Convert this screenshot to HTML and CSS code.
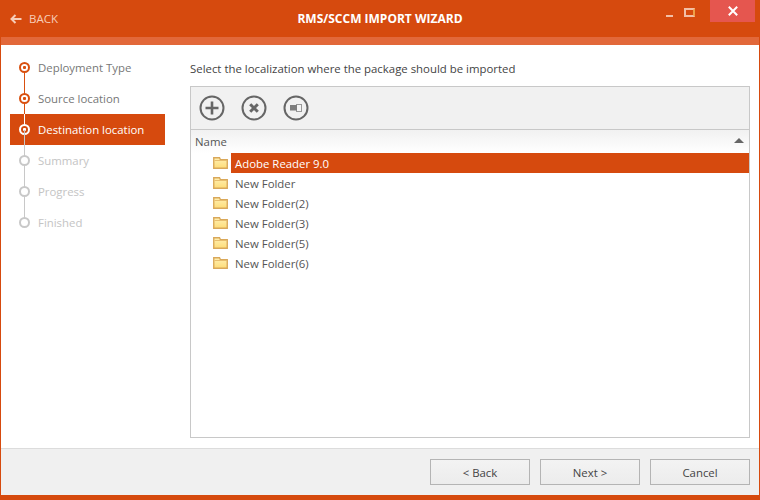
FILE: index.html
```html
<!DOCTYPE html>
<html lang="en">
<head>
<meta charset="utf-8">
<title>RMS/SCCM Import Wizard</title>
<link rel="stylesheet" href="styles.css">
</head>
<body>
<svg class="defs" width="0" height="0">
  <defs>
    <linearGradient id="fold" x1="0" y1="0" x2="0" y2="1">
      <stop offset="0" stop-color="#fff0b4"/>
      <stop offset="1" stop-color="#fddc78"/>
    </linearGradient>
  </defs>
  <symbol id="folder" viewBox="0 0 15 12">
    <path d="M.75 11.250V.75H6.500L7.500 2.750H14.250V11.250z" fill="url(#fold)" stroke="#d9a85a" stroke-width="1.400"/>
    <path d="M1.500 3.500h12" stroke="#e7bd6e"/>
  </symbol>
</svg>
<div class="window">
  <header class="titlebar">
    <div class="back">
      <svg class="back-icon" width="12" height="10" viewBox="0 0 12 10"><path d="M5.500 1 1.500 5l4 4M2 5h9.500" fill="none" stroke="#f6cdb8" stroke-width="2"/></svg>
      <span>BACK</span>
    </div>
    <h1 class="title">RMS/SCCM IMPORT WIZARD</h1>
    <div class="controls">
      <span class="ctl-min"></span>
      <span class="ctl-max"></span>
      <span class="ctl-close">
        <svg width="10" height="10" viewBox="0 0 10 10"><path d="M.8.8l8.400 8.400M9.200.8.800 9.200" stroke="#fff" stroke-width="2"/></svg>
      </span>
    </div>
  </header>
  <div class="strip"></div>
  <div class="content">
    <nav class="steps">
      <div class="step done first">Deployment Type</div>
      <div class="step done">Source location</div>
      <div class="step active">Destination location</div>
      <div class="step todo">Summary</div>
      <div class="step todo">Progress</div>
      <div class="step todo last">Finished</div>
    </nav>
    <main class="main">
      <p class="prompt">Select the localization where the package should be imported</p>
      <section class="panel">
        <div class="toolbar">
          <svg class="tool" width="26" height="26" viewBox="0 0 26 26"><circle cx="13" cy="13" r="11.500" fill="none" stroke="#666" stroke-width="2"/><path d="M13 6.500v13M6.500 13h13" stroke="#666" stroke-width="2.600"/></svg>
          <svg class="tool" width="26" height="26" viewBox="0 0 26 26"><circle cx="13" cy="13" r="11.500" fill="none" stroke="#666" stroke-width="2"/><path d="M9.200 9.200l7.600 7.600M16.800 9.200l-7.600 7.600" stroke="#666" stroke-width="3"/></svg>
          <svg class="tool" width="26" height="26" viewBox="0 0 26 26"><circle cx="13" cy="13" r="11.500" fill="none" stroke="#666" stroke-width="2"/><rect x="13.500" y="9.500" width="5" height="7" fill="#f4f4f4" stroke="#999"/><rect x="7" y="10" width="7" height="5.500" fill="#7d7d7d"/></svg>
        </div>
        <div class="head">
          <span>Name</span>
          <i class="sort"></i>
        </div>
        <ul class="tree">
          <li class="row selected"><svg class="folder" width="15" height="12"><use href="#folder"/></svg><span class="label">Adobe Reader 9.0</span></li>
          <li class="row"><svg class="folder" width="15" height="12"><use href="#folder"/></svg><span class="label">New Folder</span></li>
          <li class="row"><svg class="folder" width="15" height="12"><use href="#folder"/></svg><span class="label">New Folder(2)</span></li>
          <li class="row"><svg class="folder" width="15" height="12"><use href="#folder"/></svg><span class="label">New Folder(3)</span></li>
          <li class="row"><svg class="folder" width="15" height="12"><use href="#folder"/></svg><span class="label">New Folder(5)</span></li>
          <li class="row"><svg class="folder" width="15" height="12"><use href="#folder"/></svg><span class="label">New Folder(6)</span></li>
        </ul>
      </section>
    </main>
  </div>
  <footer class="footer">
    <button class="btn">&lt; Back</button>
    <button class="btn">Next &gt;</button>
    <button class="btn">Cancel</button>
  </footer>
</div>
</body>
</html>
```

FILE: styles.css
```css
*, *::before, *::after { box-sizing: border-box; }
html, body { margin: 0; height: 100%; }
body {
  font-family: "Open Sans", "Noto Sans", sans-serif;
  font-size: 11.400px;
  color: #555;
  background: #fff;
  overflow: hidden;
}
.defs { display: block; height: 0; }
.window {
  width: 760px;
  height: 500px;
  display: flex;
  flex-direction: column;
  border-left: 1px solid #d64a0e;
  border-right: 1px solid #d64a0e;
  border-bottom: 5px solid #d64a0e;
  background: #fff;
}
.titlebar {
  height: 37px;
  margin: 0 -1px;
  background: #d64a0e;
  display: grid;
  grid-template-columns: 1fr auto 1fr;
  align-items: start;
  color: #fff;
  flex: none;
}
.back {
  display: flex;
  align-items: center;
  gap: 7px;
  height: 37px;
  padding-left: 10px;
  color: #f6cdb8;
  font-size: 11.500px;
}
.title {
  margin: 0;
  line-height: 37px;
  font-size: 12px;
  font-weight: 700;
  color: #fff;
}
.controls {
  display: flex;
  justify-content: flex-end;
  align-items: flex-start;
  padding-right: 5px;
  height: 22px;
}
.ctl-min {
  width: 7px;
  height: 2px;
  margin: 15px 11px 0 0;
  background: #f2bfa6;
}
.ctl-max {
  width: 11px;
  height: 9px;
  margin: 8px 15px 0 0;
  border: 2px solid #f2bfa6;
  border-right-color: #eea046;
}
.ctl-close {
  width: 45px;
  height: 22px;
  background: #e5564f;
  display: flex;
  align-items: center;
  justify-content: center;
}
.strip { height: 8px; background: #e2683a; flex: none; }
.content { flex: 1; display: flex; min-height: 0; border-bottom: 1px solid #dcdcdc; }
.steps { width: 189px; padding: 7px 0 0 9px; flex: none; }
.step {
  position: relative;
  width: 155px;
  height: 31px;
  line-height: 31px;
  padding-left: 28px;
  color: #777;
}
.step::before {
  content: "";
  position: absolute;
  left: 14px;
  top: 0;
  bottom: 0;
  width: 1px;
  background: #d9500f;
}
.step.first::before { top: 15px; }
.step.last::before { bottom: 15px; }
.step::after {
  content: "";
  position: absolute;
  left: 9px;
  top: 10px;
  width: 11px;
  height: 11px;
  border-radius: 50%;
  background: #fff radial-gradient(circle, #d9500f 0 1.300px, #fff 1.800px);
  border: 2px solid #d9500f;
}
.step.active {
  background: #d64a0e;
  color: #fff;
}
.step.active::before { background: #fff; bottom: 15px; }
.step.active::after {
  background: #d64a0e radial-gradient(circle, #fff 0 1.300px, #d64a0e 1.800px);
  border-color: #fff;
}
.step.todo { color: #c4c4c4; }
.step.todo::before { background: #c8c8c8; }
.step.todo::after { background: #fff; border-color: #c8c8c8; }
.step.active + .step.todo::before { top: -15px; }
.main { flex: 1; padding: 15px 9px 10px 0; display: flex; flex-direction: column; min-width: 0; }
.prompt { margin: 0 0 9px; line-height: 17px; color: #444; }
.panel { flex: 1; border: 1px solid #c8c8c8; display: flex; flex-direction: column; min-height: 0; }
.toolbar {
  height: 43px;
  background: #f1f1f1;
  border-bottom: 1px solid #c8c8c8;
  display: flex;
  align-items: center;
  gap: 16px;
  padding: 0 0 0 8px;
  flex: none;
}
.head {
  height: 23px;
  flex: none;
  display: flex;
  align-items: center;
  justify-content: space-between;
  padding: 0 5px 0 4px;
  background: linear-gradient(#f1f1f1, #fff);
  color: #555;
}
.sort {
  width: 0;
  height: 0;
  border-left: 5px solid transparent;
  border-right: 5px solid transparent;
  border-bottom: 5px solid #666;
  margin-bottom: 2px;
}
.tree { list-style: none; margin: 0; padding: 0; }
.row { height: 20px; display: flex; align-items: center; padding-left: 22px; }
.folder { flex: none; margin-right: 3px; }
.label { flex: 1; height: 20px; line-height: 21px; padding-left: 4px; color: #555; }
.selected .label { background: #d64a0e; color: #fff; }
.footer {
  height: 46px;
  flex: none;
  background: #f0f0f0;
  display: flex;
  justify-content: flex-end;
  gap: 10px;
  padding: 10px 9px 0 0;
}
.btn {
  width: 100px;
  height: 26px;
  padding: 0;
  font: inherit;
  color: #444;
  border: 1px solid #b4b4b4;
  background: linear-gradient(#f3f3f3, #ececec);
  border-radius: 0;
}
```
